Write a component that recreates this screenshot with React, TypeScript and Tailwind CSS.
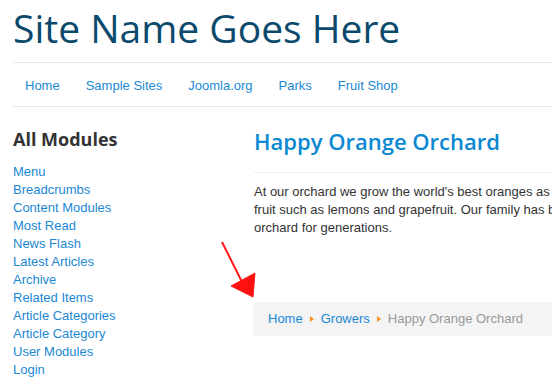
import React from "react";

const modules = [
  "Menu",
  "Breadcrumbs",
  "Content Modules",
  "Most Read",
  "News Flash",
  "Latest Articles",
  "Archive",
  "Related Items",
  "Article Categories",
  "Article Category",
  "User Modules",
  "Login",
];

const nav = ["Home", "Sample Sites", "Joomla.org", "Parks", "Fruit Shop"];

function Divider() {
  return (
    <span className="mx-[7px] inline-block h-0 w-0 border-y-[3.5px] border-l-[4px] border-y-transparent border-l-[#f7931e]" />
  );
}

export default function App() {
  return (
    <div className="relative h-[378px] w-[552px] overflow-hidden bg-white pl-[13px] font-['Liberation_Sans',Arial,sans-serif] text-[13px] leading-[18px] text-[#333]">
      <header className="pt-[6px] pb-[12px]">
        <h1 className="whitespace-nowrap font-['Open_Sans',sans-serif] text-[39px] font-normal leading-[44px] text-[#0b4a6c]">
          Site Name Goes Here
        </h1>
      </header>
      <nav className="flex w-[800px] border-y border-[#e8e8e8] pt-[14px] pb-[11px]">
        {nav.map((n) => (
          <a key={n} className="mr-[2px] whitespace-nowrap px-3 text-[#1a88d4]">
            {n}
          </a>
        ))}
      </nav>
      <div className="flex">
        <aside className="w-[241px] shrink-0 pt-[20px]">
          <h3 className="font-['Open_Sans',sans-serif] text-[18px] font-bold leading-[24px] text-[#333]">
            All Modules
          </h3>
          <ul className="mt-[12px]">
            {modules.map((m) => (
              <li key={m} className="text-[#1a88d4]">
                {m}
              </li>
            ))}
          </ul>
        </aside>
        <main className="w-[700px] shrink-0 pt-[19px]">
          <h2 className="border-b border-[#eeeeee] pb-[16px] font-['Open_Sans',sans-serif] text-[22px] font-semibold leading-[30px] text-[#0a88d2]">
            Happy Orange Orchard
          </h2>
          <p className="mt-[10px] whitespace-nowrap">
            At our orchard we grow the world's best oranges as well as other citrus
            <br />
            fruit such as lemons and grapefruit. Our family has been working this
            <br />
            orchard for generations.
          </p>
          <div className="-ml-px mt-[65px] flex items-center rounded-[4px] bg-[#f4f4f4] px-[15px] py-[8px]">
            <a className="text-[#1a88d4]">Home</a>
            <Divider />
            <a className="text-[#1a88d4]">Growers</a>
            <Divider />
            <span className="text-[#999]">Happy Orange Orchard</span>
          </div>
        </main>
      </div>
      <svg
        className="pointer-events-none absolute left-0 top-0"
        width="552"
        height="378"
        viewBox="0 0 552 378"
      >
        <line x1="222" y1="242" x2="243" y2="284" stroke="#ff1a1a" strokeWidth="2" />
        <polygon points="253,297 231,286 255,273" fill="#ff1010" stroke="#ff1a1a" strokeWidth="1" />
      </svg>
    </div>
  );
}
